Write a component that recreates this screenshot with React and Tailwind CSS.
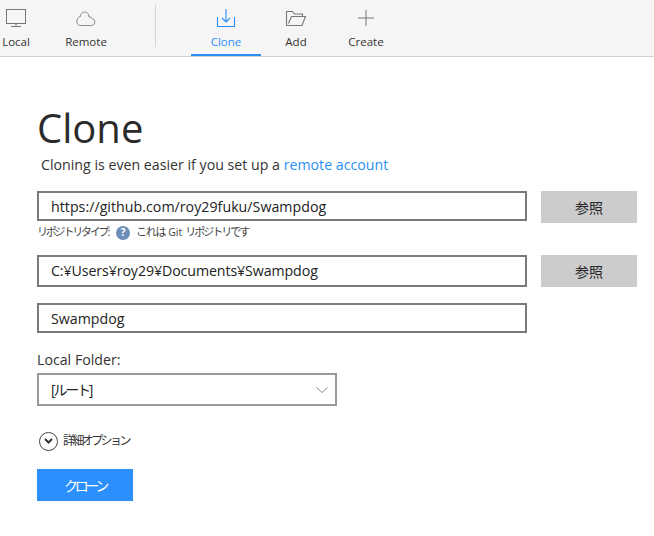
const MonitorIcon = () => (
  <svg width="22" height="20" viewBox="0 0 22 20" fill="none" stroke="#777" strokeWidth="1">
    <rect x="1.5" y="1.5" width="19" height="14" />
    <path d="M11 15.5v3M6 18.5h10" />
  </svg>
);

const CloudIcon = () => (
  <svg width="22" height="20" viewBox="0 0 22 20" fill="none" stroke="#8a8a8a" strokeWidth="1">
    <path d="M5 17.500h11.500a3.500 3.500 0 0 0 1-6.800 a4 4 0 0 0-3.500-1.700 a5 5 0 0 0-4.500-5 a4.500 4.500 0 0 0-4 4.500 a4 4 0 0 0-3.500 4.500 a4 4 0 0 0 3 4.500z" />
  </svg>
);

const DownloadIcon = () => (
  <svg width="20" height="20" viewBox="0 0 20 20" fill="none" stroke="#2b90f5" strokeWidth="1.1">
    <path d="M1.500 9v9.500h17V9" />
    <path d="M10 1v12.500M6 10l4 4 4-4" />
  </svg>
);

const FolderIcon = () => (
  <svg width="22" height="20" viewBox="0 0 22 20" fill="none" stroke="#777" strokeWidth="1.1">
    <path d="M1.500 17.500V3.500h6l2 2.500h8v2.500" />
    <path d="M1.500 17.500h15.500l3.500-9H6.500l-3 7" />
  </svg>
);

const PlusIcon = () => (
  <svg width="20" height="20" viewBox="0 0 20 20" fill="none" stroke="#777" strokeWidth="1">
    <path d="M10 2v16M2 10h16" />
  </svg>
);

const SelectChevron = () => (
  <svg width="14" height="8" viewBox="0 0 14 8" fill="none" stroke="#8a8a8a" strokeWidth="1">
    <path d="M1.500 1.500L7 6.500l5.500-5" />
  </svg>
);

const ExpandChevron = () => (
  <svg width="11" height="8" viewBox="0 0 11 8" fill="none" stroke="#333" strokeWidth="2">
    <path d="M2 2l3.500 3.500L9 2" />
  </svg>
);

const ToolbarItem = ({ icon, label, active, className = '' }) => (
  <div className={`relative flex h-[55px] w-[70px] flex-col items-center pt-[8px] ${className}`}>
    <div className="flex h-[20px] items-center justify-center">{icon}</div>
    <div className={`mt-[6px] text-[11.5px] leading-[16px] ${active ? 'text-[#2b90f5]' : 'text-[#333]'}`}>{label}</div>
    {active && <div className="absolute bottom-[-1px] left-0 h-[2px] w-full bg-[#2b90f5]" />}
  </div>
);

const TextBox = ({ value, className = '' }) => (
  <div className={`flex w-[490px] items-center border-2 border-[#7a7a7a] pl-[12px] text-[14.2px] text-[#222] ${className}`}>
    {value}
  </div>
);

const BrowseButton = () => (
  <button className="flex h-[32px] w-[96px] items-center justify-center bg-[#cccccc] text-[14px] text-[#222]">
    参照
  </button>
);

export default function App() {
  return (
    <div className="h-[536px] w-[654px] overflow-hidden bg-white font-['Open_Sans','Noto_Sans_CJK_JP',sans-serif]">
      <div className="flex h-[57px] items-start border-b border-[#d0d0d0] bg-[#f5f5f5]">
        <ToolbarItem icon={<MonitorIcon />} label="Local" className="ml-[-19px]" />
        <ToolbarItem icon={<CloudIcon />} label="Remote" />
        <div className="ml-[34px] mr-[35px] mt-[5px] h-[42px] w-px bg-[#d4d4d4]" />
        <ToolbarItem icon={<DownloadIcon />} label="Clone" active />
        <ToolbarItem icon={<FolderIcon />} label="Add" />
        <ToolbarItem icon={<PlusIcon />} label="Create" />
      </div>

      <div className="pl-[37px]">
        <h1 className="mt-[44px] text-[40px] leading-[54px] text-[#2b2b2b]">Clone</h1>
        <p className="ml-[4px] text-[14.2px] leading-[20px] text-[#333]">
          Cloning is even easier if you set up a <span className="text-[#2b90f5]">remote account</span>
        </p>

        <div className="mt-[16px] flex items-start gap-[14px]">
          <TextBox value="https://github.com/roy29fuku/Swampdog" className="h-[30px] pt-[1px] tracking-[0.03px]" />
          <BrowseButton />
        </div>
        <div className="mt-[1px] flex h-[17px] items-center text-[11px] text-[#444]">
          <span className="tracking-[-2.2px]">リポジトリタイプ:</span>
          <span className="ml-[8px] mr-[6px] flex h-[14px] w-[14px] items-center justify-center rounded-full bg-[#6c8fb8] text-[10px] font-bold text-white">?</span>
          <span className="tracking-[-1.3px]">これは</span>
          <span className="mx-[3px] text-[10.500px]">Git</span>
          <span className="tracking-[-2px]">リポジトリです</span>
        </div>

        <div className="mt-[14px] flex items-start gap-[14px]">
          <TextBox value="C:¥Users¥roy29¥Documents¥Swampdog" className="h-[32px] pb-[1px] tracking-[-0.09px]" />
          <BrowseButton />
        </div>

        <TextBox value="Swampdog" className="mt-[16px] h-[30px] pt-[2px]" />

        <div className="mt-[17px] text-[14.2px] leading-[20px] text-[#333]">Local Folder:</div>
        <div className="mt-[3px] flex h-[33px] w-[300px] items-center justify-between border-2 border-[#9a9a9a] pl-[12px] pr-[6px] text-[14px] tracking-[-2.2px] text-[#222]">
          <span>[ルート]</span>
          <SelectChevron />
        </div>

        <div className="ml-[2px] mt-[25px] flex h-[20px] items-center gap-[5px] text-[12px] tracking-[-2.6px] text-[#333]">
          <span className="flex h-[19px] w-[19px] items-center justify-center rounded-full border border-[#444]">
            <ExpandChevron />
          </span>
          <span>詳細オプション</span>
        </div>

        <button className="mt-[18px] flex h-[32px] w-[96px] items-center justify-center bg-[#2b90fe] text-[14px] tracking-[-3.3px] text-white">
          クローン
        </button>
      </div>
    </div>
  );
}
